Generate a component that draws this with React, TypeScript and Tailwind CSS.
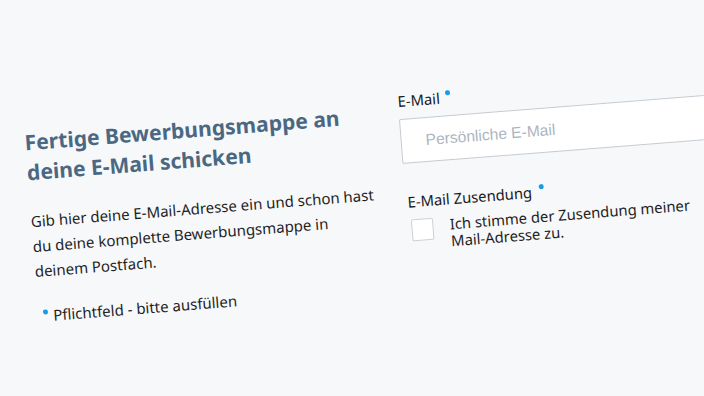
import React from "react";

const Dot = ({ className = "" }: { className?: string }) => (
  <span className={`block w-[5px] h-[5px] rounded-full bg-[#1b9be3] shrink-0 ${className}`} />
);

export default function App() {
  return (
    <div className="w-[704px] h-[396px] overflow-hidden bg-[#f7f8fa] font-['Noto_Sans',sans-serif]">
      <div className="w-[704px] h-[396px] rotate-[-4.5deg] flex">
        {/* left column */}
        <div className="w-[405px] shrink-0 pl-[30px] pt-[102px] flex flex-col">
          <h2 className="text-[21.1px] leading-[30px] font-bold text-[#4b6883]">
            Fertige Bewerbungsmappe an
            <br />
            deine E-Mail schicken
          </h2>
          <p className="mt-[21.5px] text-[15px] leading-[25px] text-[#1f1f1f]">
            Gib hier deine E-Mail-Adresse ein und schon hast
            <br />
            du deine komplette Bewerbungsmappe in
            <br />
            deinem Postfach.
          </p>
          <div className="mt-[20.5px] pl-[4.5px] flex items-start gap-[5.5px] text-[15px] leading-[25px] text-[#1f1f1f]">
            <Dot className="mt-[6px]" />
            <span>Pflichtfeld - bitte ausfüllen</span>
          </div>
        </div>
        {/* right column */}
        <div className="w-[380px] shrink-0 pt-[95px] flex flex-col">
          <div className="flex items-start text-[14.8px] leading-[20px] text-[#1a1a1a]">
            <span>E-Mail</span>
            <Dot className="mt-[3px] ml-[6px]" />
          </div>
          <input
            type="text"
            placeholder="Persönliche E-Mail"
            className="mt-[8px] w-[380px] h-[45px] bg-white border border-[#c6cbd2] rounded-[2px] pl-[24px] font-['Liberation_Sans',sans-serif] text-[15.6px] text-[#333] placeholder:text-[#adb5c1] outline-none"
          />
          <div className="mt-[28px] ml-[2px] flex items-start text-[14.8px] leading-[20px] text-[#1a1a1a]">
            <span>E-Mail Zusendung</span>
            <Dot className="mt-[3px] ml-[7px]" />
          </div>
          <div className="mt-[8px] ml-[4px] flex items-start gap-[16.5px]">
            <span className="block w-[22px] h-[22px] bg-white border border-[#cdd1d7] rounded-[2px] shrink-0" />
            <span className="-mt-[1px] text-[14.8px] leading-[16.5px] text-[#1f1f1f]">
              Ich stimme der Zusendung meiner
              <br />
              Mail-Adresse zu.
            </span>
          </div>
        </div>
      </div>
    </div>
  );
}
